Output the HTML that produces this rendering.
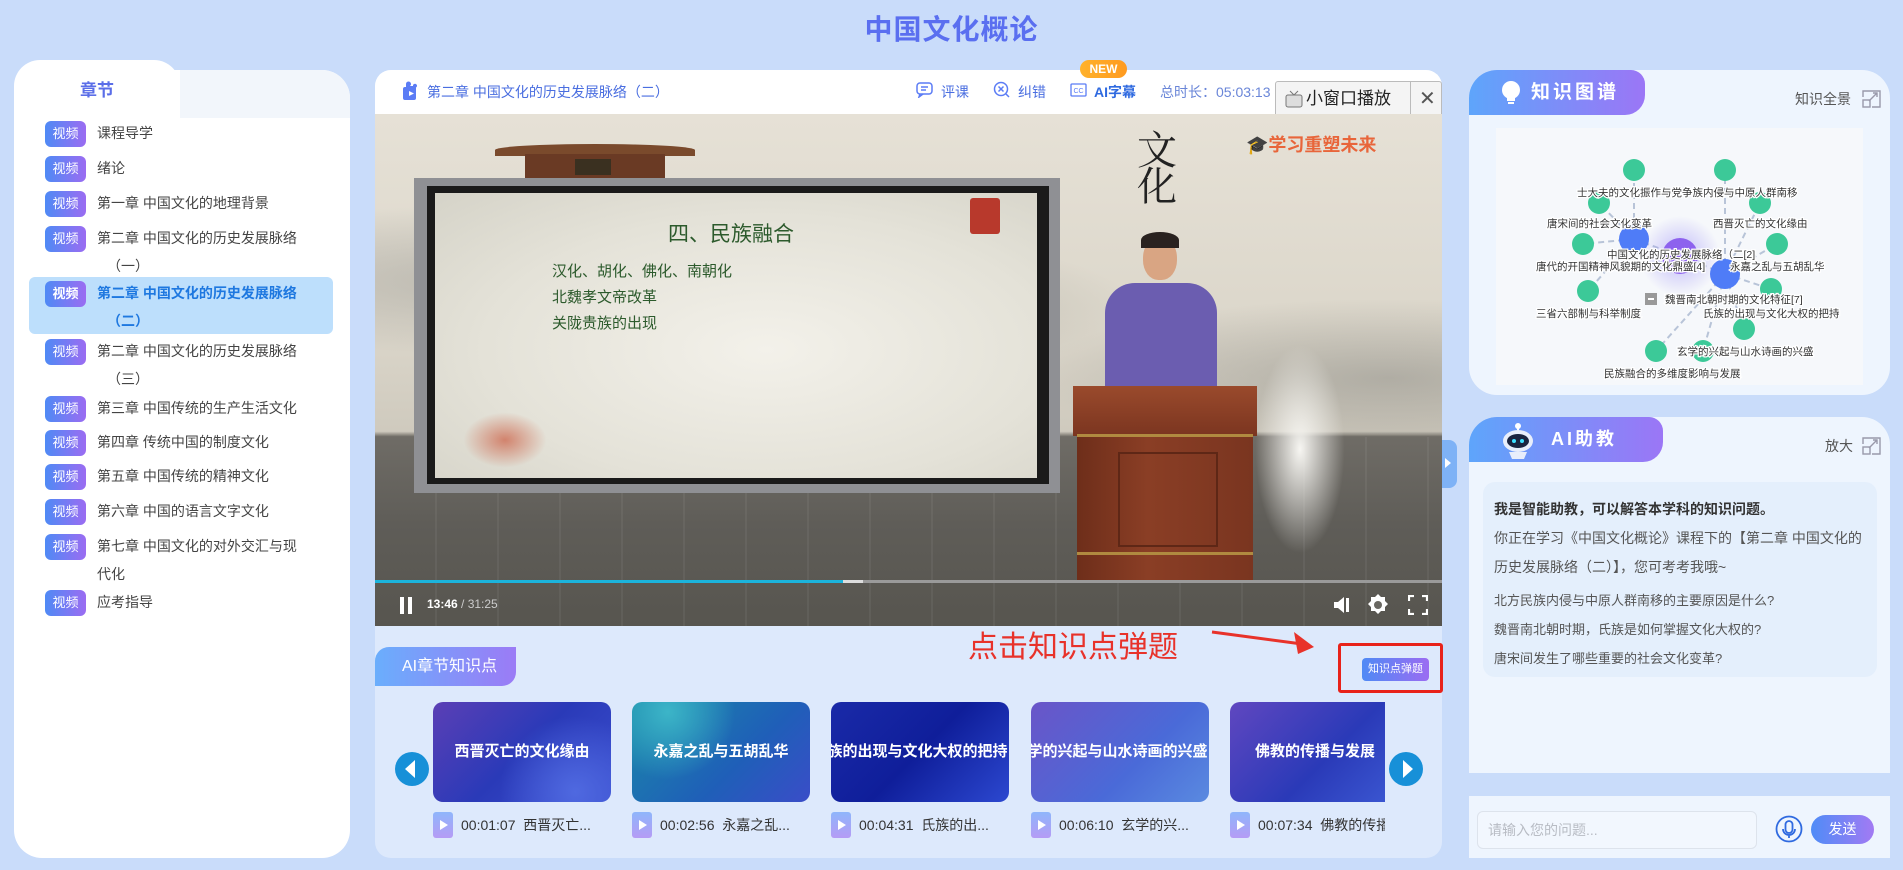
<!DOCTYPE html>
<html><head><meta charset="utf-8">
<style>
*{box-sizing:border-box;margin:0;padding:0}
body{width:1903px;height:870px;background:#c9dcfa;font-family:"Liberation Sans","Noto Sans CJK SC",sans-serif;position:relative;overflow:hidden;color:#333}
.abs{position:absolute}
.title{left:0;width:1903px;top:8px;text-align:center;font-size:28px;font-weight:bold;color:#5a6ff0;letter-spacing:1px}
.left{left:14px;top:70px;width:336px;height:788px;background:#fff;border-radius:28px}
.ltabbg{left:180px;top:70px;width:170px;height:48px;background:#f2f6fb;border-radius:0 28px 0 0}
.ltab{left:14px;top:60px;width:166px;height:60px;background:#fff;border-radius:26px 26px 0 0}
.ltab span{position:absolute;left:0;right:0;top:16px;text-align:center;font-size:17px;font-weight:bold;color:#5b6ee8}
.item{position:absolute;left:45px;font-size:14px;color:#444;line-height:28px}
.badge{position:absolute;left:0;top:2px;width:41px;height:26px;border-radius:6px;background:linear-gradient(90deg,#4f8af5,#9b6cf2);color:#fff;font-size:13px;text-align:center;line-height:26px}
.item .t{position:absolute;left:52px;top:0;white-space:nowrap}
.item .t2{position:absolute;left:62px;top:28px;white-space:nowrap}
.hl{left:29px;top:277px;width:304px;height:57px;background:#bddffc;border-radius:6px}
.center{left:375px;top:70px;width:1067px;height:788px;background:#dde9fc;border-radius:16px}
.chead{left:375px;top:70px;width:1067px;height:44px;background:#fff;border-radius:16px 16px 0 0}
.hd{font-size:14px;color:#4a6ee0;top:82px;white-space:nowrap}
.video{left:375px;top:114px;width:1067px;height:512px;overflow:hidden;background:linear-gradient(180deg,#e6e1d6 0%,#dcd7cb 40%,#cfcabe 62%,#6f6c66 63%,#5f5d58 80%,#57554f 100%)}
.right1{left:1469px;top:70px;width:421px;height:325px;background:#eef5fe;border-radius:28px}
.right2{left:1469px;top:417px;width:421px;height:356px;background:#eef5fe;border-radius:28px 28px 0 0}
.rtab{background:linear-gradient(90deg,#5ea5fb,#9b76f6);border-radius:0 0 20px 0;color:#fff;font-weight:bold;font-size:19px;letter-spacing:3px}
.card{position:absolute;top:702px;width:178px;height:100px;border-radius:10px;color:#fff;font-size:15px;font-weight:bold;text-align:center;line-height:100px;white-space:nowrap;overflow:hidden}
.ct{position:absolute;top:812px;font-size:14px;color:#333;white-space:nowrap;line-height:26px}
.ct i{display:inline-block;width:20px;height:26px;background:linear-gradient(180deg,#8fb6fb,#b59cf5);border-radius:3px;vertical-align:top;margin-right:8px;position:relative}
.ct i:after{content:"";position:absolute;left:7px;top:8px;border-left:8px solid #fff;border-top:5px solid transparent;border-bottom:5px solid transparent}
</style></head><body>
<div class="abs title">中国文化概论</div>

<div class="abs left"></div>
<div class="abs ltabbg"></div>
<div class="abs ltab"><span>章节</span></div>
<div class="abs hl"></div>
<div class="item" style="top:119px"><div class="badge">视频</div><div class="t">课程导学</div></div>
<div class="item" style="top:154px"><div class="badge">视频</div><div class="t">绪论</div></div>
<div class="item" style="top:189px"><div class="badge">视频</div><div class="t">第一章 中国文化的地理背景</div></div>
<div class="item" style="top:224px"><div class="badge">视频</div><div class="t">第二章 中国文化的历史发展脉络</div><div class="t2">（一）</div></div>
<div class="item" style="top:279px;color:#1e78e0;font-weight:bold"><div class="badge">视频</div><div class="t">第二章 中国文化的历史发展脉络</div><div class="t2">（二）</div></div>
<div class="item" style="top:337px"><div class="badge">视频</div><div class="t">第二章 中国文化的历史发展脉络</div><div class="t2">（三）</div></div>
<div class="item" style="top:394px"><div class="badge">视频</div><div class="t">第三章 中国传统的生产生活文化</div></div>
<div class="item" style="top:428px"><div class="badge">视频</div><div class="t">第四章 传统中国的制度文化</div></div>
<div class="item" style="top:462px"><div class="badge">视频</div><div class="t">第五章 中国传统的精神文化</div></div>
<div class="item" style="top:497px"><div class="badge">视频</div><div class="t">第六章 中国的语言文字文化</div></div>
<div class="item" style="top:532px"><div class="badge">视频</div><div class="t">第七章 中国文化的对外交汇与现</div><div class="t2" style="left:52px">代化</div></div>
<div class="item" style="top:588px"><div class="badge">视频</div><div class="t">应考指导</div></div>

<div class="abs center"></div>
<div class="abs chead"></div>
<svg class="abs" style="left:401px;top:81px" width="20" height="20" viewBox="0 0 20 20"><path d="M5 3a2.5 2.5 0 1 1 4 2h3a2 2 0 1 1 3 1.5V17a2 2 0 0 1-2 2H4a2 2 0 0 1-2-2V8a2 2 0 0 1 2-2h1z" fill="#5b7cf5"/><path d="M8 10l5 2.5-5 2.5z" fill="#fff"/></svg>
<div class="abs hd" style="left:427px;top:82px">第二章 中国文化的历史发展脉络（二）</div>
<svg class="abs" style="left:916px;top:82px" width="17" height="16"><rect x="1" y="1" width="15" height="11" rx="3" fill="none" stroke="#5b7cf5" stroke-width="1.5"/><path d="M4 12l-1 3 4-3M5 5h7M5 8h5" stroke="#5b7cf5" stroke-width="1.5" fill="none"/></svg>
<div class="abs hd" style="left:941px">评课</div>
<svg class="abs" style="left:993px;top:81px" width="17" height="17"><circle cx="8" cy="8" r="6.5" fill="none" stroke="#5b7cf5" stroke-width="1.5"/><path d="M5.5 5.5l5 5M10.5 5.5l-5 5M13 13l3 3" stroke="#5b7cf5" stroke-width="1.5"/></svg>
<div class="abs hd" style="left:1018px">纠错</div>
<svg class="abs" style="left:1070px;top:83px" width="17" height="14"><rect x="1" y="1" width="15" height="12" rx="1" fill="none" stroke="#5b7cf5" stroke-width="1.3"/><text x="3.5" y="10" font-size="7" fill="#5b7cf5" font-family="Liberation Sans">CC</text></svg>
<div class="abs hd" style="left:1094px;font-weight:bold;color:#2f6ae0">AI字幕</div>
<div class="abs" style="left:1080px;top:60px;width:47px;height:18px;border-radius:9px;background:linear-gradient(90deg,#ffb22c,#ff9a1f);color:#fff;font-size:12px;font-weight:bold;text-align:center;line-height:18px">NEW</div>
<div class="abs hd" style="left:1160px;color:#6a86d8">总时长：05:03:13</div>
<div class="abs" style="left:1275px;top:81px;width:167px;height:36px;background:#f4f4f4;border:1px solid #bbb;border-radius:3px;font-size:17px;color:#222;line-height:34px"><span style="position:absolute;left:30px">小窗口播放</span><span style="position:absolute;left:134px;top:0;width:1px;height:34px;background:#bbb"></span><span style="position:absolute;left:143px;font-size:20px;color:#555">✕</span>
<svg style="position:absolute;left:9px;top:8px" width="18" height="19"><path d="M5 1l4 4 4-4" stroke="#777" fill="none"/><rect x="1" y="5" width="16" height="12" rx="2" fill="#ddd" stroke="#777"/></svg></div>

<div class="abs video">
 <div class="abs" style="left:0;top:40px;width:1067px;height:280px;background:radial-gradient(ellipse at 15% 45%,rgba(140,140,135,.45),rgba(0,0,0,0) 35%),radial-gradient(ellipse at 50% 55%,rgba(150,150,140,.35),rgba(0,0,0,0) 30%),radial-gradient(ellipse at 95% 80%,rgba(120,120,115,.4),rgba(0,0,0,0) 25%)"></div>
 <div class="abs" style="left:120px;top:30px;width:200px;height:12px;background:#7a4a2c;border-radius:50% 50% 0 0"></div>
 <div class="abs" style="left:150px;top:40px;width:140px;height:28px;background:#6a3a24"></div>
 <div class="abs" style="left:200px;top:45px;width:36px;height:16px;background:#3a3020"></div>
 <div class="abs" style="left:135px;top:66px;width:170px;height:10px;background:#8a5a38;border-radius:50% 50% 0 0"></div>
 <div class="abs" style="left:0;top:323px;width:1067px;height:190px;background:repeating-linear-gradient(90deg,rgba(255,255,255,0) 0 60px,rgba(255,255,255,.05) 60px 62px)"></div>
 <div class="abs" style="left:39px;top:64px;width:646px;height:315px;background:#8f9094"></div>
 <div class="abs" style="left:52px;top:72px;width:622px;height:298px;background:#1a1a1a"></div>
 <div class="abs" style="left:60px;top:79px;width:602px;height:285px;background:radial-gradient(ellipse at 55% 55%,#f3f1ea 0%,#e4e2d8 60%,#d5d3c8 100%)"></div>
 <div class="abs" style="left:880px;top:230px;width:90px;height:210px;background:radial-gradient(ellipse,#f7f6f2 0%,rgba(245,243,238,0) 70%)"></div>
</div>
<div class="abs" style="left:668px;top:218px;font-size:21px;color:#2c5a2c">四、民族融合</div>
<div class="abs" style="left:552px;top:259px;font-size:15px;color:#2c5a2c;line-height:26px">汉化、胡化、佛化、南朝化<br>北魏孝文帝改革<br>关陇贵族的出现</div>
<div class="abs" style="left:970px;top:198px;width:30px;height:36px;background:#b8392c;border-radius:3px"></div>
<div class="abs" style="left:460px;top:410px;width:90px;height:60px;background:radial-gradient(ellipse,rgba(200,70,40,.6),rgba(0,0,0,0) 65%)"></div>
<div class="abs" style="left:1246px;top:131px;font-size:18px;font-weight:bold;color:#e8653a">🎓学习重塑未来</div>
<div class="abs" style="left:1137px;top:130px;font-size:40px;color:#222;font-family:'Noto Serif CJK SC',serif;line-height:36px;width:60px">文<br>化</div>
<div class="abs" style="left:1143px;top:236px;width:34px;height:44px;border-radius:50% 50% 45% 45%;background:#d9a583"></div>
<div class="abs" style="left:1141px;top:232px;width:38px;height:16px;border-radius:50% 50% 0 0;background:#2a2220"></div>
<div class="abs" style="left:1105px;top:283px;width:112px;height:110px;border-radius:30px 30px 0 0;background:#6b5db0"></div>
<div class="abs" style="left:1073px;top:386px;width:184px;height:50px;background:linear-gradient(180deg,#9a4a2c,#7b3520)"></div>
<div class="abs" style="left:1077px;top:434px;width:176px;height:146px;background:linear-gradient(90deg,#6e2e1a,#8a3e25 40%,#7a3520)"></div>
<div class="abs" style="left:1077px;top:434px;width:176px;height:3px;background:#b08a40"></div>
<div class="abs" style="left:1077px;top:552px;width:176px;height:3px;background:#b08a40"></div>
<div class="abs" style="left:1118px;top:452px;width:100px;height:95px;border:2px solid #5e2716"></div>
<div class="abs" style="left:375px;top:580px;width:1067px;height:3px;background:#9a9a9a"></div>
<div class="abs" style="left:375px;top:580px;width:468px;height:3px;background:#1bb4dc"></div>
<div class="abs" style="left:843px;top:580px;width:20px;height:3px;background:#ddd"></div>
<div class="abs" style="left:400px;top:597px;width:4px;height:17px;background:#fff"></div>
<div class="abs" style="left:408px;top:597px;width:4px;height:17px;background:#fff"></div>
<div class="abs" style="left:427px;top:597px;font-size:12px;color:#fff;font-weight:bold">13:46 <span style="color:#ccc;font-weight:normal">/ 31:25</span></div>
<svg class="abs" style="left:1332px;top:594px" width="22" height="22"><path d="M2 8h4l6-5v16l-6-5H2z" fill="#fff"/><rect x="14" y="4" width="3" height="14" fill="#fff"/></svg>
<svg class="abs" style="left:1366px;top:593px" width="24" height="24" viewBox="0 0 24 24"><path d="M12 1l3 3h4v4l3 3-3 3v4h-4l-3 3-3-3H5v-4l-3-3 3-3V4h4z" fill="#fff"/><circle cx="12" cy="12" r="4" fill="#6a6862"/></svg>
<svg class="abs" style="left:1408px;top:595px" width="20" height="20"><path d="M1 6V1h5M14 1h5v5M19 14v5h-5M6 19H1v-5" stroke="#fff" stroke-width="2.2" fill="none"/></svg>

<div class="abs" style="left:1442px;top:440px;width:15px;height:48px;background:#7eb2f6;border-radius:0 8px 8px 0"></div>
<div class="abs" style="left:1445px;top:458px;border-left:6px solid #fff;border-top:5px solid transparent;border-bottom:5px solid transparent"></div>

<div class="abs" style="left:375px;top:647px;width:141px;height:39px;background:linear-gradient(90deg,#6aaefc,#9b7bf6);border-radius:14px 0 14px 0;color:#fff;font-size:16px;line-height:39px;padding-left:27px">AI章节知识点</div>
<div class="abs" style="left:968px;top:622px;font-size:30px;color:#e8322a;white-space:nowrap">点击知识点弹题</div>
<svg class="abs" style="left:1210px;top:628px" width="105" height="26"><path d="M2 4L92 16" stroke="#e8322a" stroke-width="3"/><path d="M104 19L84 4 88 26z" fill="#e8322a"/></svg>
<div class="abs" style="left:1338px;top:643px;width:105px;height:50px;border:3px solid #e8221a;border-radius:3px"></div>
<div class="abs" style="left:1362px;top:658px;width:67px;height:23px;background:linear-gradient(90deg,#4f8af5,#9b6cf2);border-radius:4px;color:#fff;font-size:11px;text-align:center;line-height:23px">知识点弹题</div>

<div class="card" style="left:433px;background:radial-gradient(circle at 80% 90%,#4f69e0,transparent 45%),linear-gradient(135deg,#5b3fb5,#2a3ab8 50%,#3b4fd0)">西晋灭亡的文化缘由</div>
<div class="card" style="left:632px;background:radial-gradient(circle at 20% 10%,#3cb5c8,transparent 40%),linear-gradient(135deg,#1a8aa8,#1f5fb8 60%,#3a4dc8)">永嘉之乱与五胡乱华</div>
<div class="card" style="left:831px;background:linear-gradient(135deg,#1a2aa8,#0f1e9a 50%,#2c48d0);text-indent:-20px">氏族的出现与文化大权的把持</div>
<div class="card" style="left:1031px;background:linear-gradient(135deg,#6a55c8,#4a6ad8 60%,#5a8ae0);text-indent:-20px">玄学的兴起与山水诗画的兴盛</div>
<div class="card" style="left:1230px;width:155px;border-radius:10px 0 0 10px;background:linear-gradient(135deg,#6047c0,#2a3ab8 60%,#3a55d0);text-align:left;text-indent:25px">佛教的传播与发展</div>
<svg class="abs" style="left:394px;top:751px" width="36" height="36"><circle cx="18" cy="18" r="17" fill="#1790d8"/><path d="M21 9l-10 9 10 9z" fill="#fff"/></svg>
<svg class="abs" style="left:1388px;top:751px" width="36" height="36"><circle cx="18" cy="18" r="17" fill="#1790d8"/><path d="M15 9l10 9-10 9z" fill="#fff"/></svg>
<div class="ct" style="left:433px"><i></i>00:01:07&nbsp; 西晋灭亡...</div>
<div class="ct" style="left:632px"><i></i>00:02:56&nbsp; 永嘉之乱...</div>
<div class="ct" style="left:831px"><i></i>00:04:31&nbsp; 氏族的出...</div>
<div class="ct" style="left:1031px"><i></i>00:06:10&nbsp; 玄学的兴...</div>
<div class="ct" style="left:1230px;width:155px;overflow:hidden"><i></i>00:07:34&nbsp; 佛教的传播</div>

<div class="abs right1"></div>
<div class="abs rtab" style="left:1469px;top:70px;width:176px;height:45px;border-radius:28px 14px 20px 0;line-height:45px;padding-left:62px">知识图谱</div>
<svg class="abs" style="left:1500px;top:80px" width="22" height="26"><circle cx="11" cy="10" r="9" fill="#fff"/><rect x="7" y="18" width="8" height="3" fill="#fff"/><rect x="8" y="22" width="6" height="2" fill="#fff"/></svg>
<div class="abs" style="left:1795px;top:89px;font-size:14px;color:#555">知识全景</div>
<svg class="abs" style="left:1862px;top:90px" width="19" height="18"><path d="M1 7V1h17v16H10M7 11l8-8M11 3h4v4" stroke="#99a" fill="none" stroke-width="1.4"/><rect x="1" y="10" width="7" height="7" fill="none" stroke="#99a" stroke-width="1.4"/></svg>
<div class="abs" style="left:1496px;top:128px;width:367px;height:257px;background:#f6f8fb"></div>
<svg class="abs" style="left:1469px;top:70px" width="421" height="325" font-family="Liberation Sans,Noto Sans CJK SC,sans-serif">
<defs><radialGradient id="gl"><stop offset="0" stop-color="#8a7cf5" stop-opacity=".5"/><stop offset="1" stop-color="#8a7cf5" stop-opacity="0"/></radialGradient></defs>
<g transform="translate(-1469,-70)" stroke="#b8c4d8" stroke-width="2" stroke-dasharray="6 4">
<line x1="1634" y1="239" x2="1634" y2="170"/><line x1="1634" y1="239" x2="1599" y2="203"/><line x1="1634" y1="239" x2="1583" y2="244"/><line x1="1634" y1="239" x2="1588" y2="291"/><line x1="1634" y1="239" x2="1680" y2="256"/>
<line x1="1725" y1="274" x2="1725" y2="170"/><line x1="1725" y1="274" x2="1760" y2="203"/><line x1="1725" y1="274" x2="1777" y2="244"/><line x1="1725" y1="274" x2="1771" y2="289"/><line x1="1725" y1="274" x2="1744" y2="329"/><line x1="1725" y1="274" x2="1703" y2="351"/><line x1="1725" y1="274" x2="1656" y2="351"/><line x1="1725" y1="274" x2="1680" y2="256"/>
</g>
<g transform="translate(-1469,-70)">
<circle cx="1680" cy="256" r="40" fill="url(#gl)"/>
<g fill="#3cc998"><circle cx="1634" cy="170" r="11"/><circle cx="1725" cy="170" r="11"/><circle cx="1599" cy="203" r="11"/><circle cx="1760" cy="203" r="11"/><circle cx="1583" cy="244" r="11"/><circle cx="1777" cy="244" r="11"/><circle cx="1588" cy="291" r="11"/><circle cx="1771" cy="289" r="11"/><circle cx="1744" cy="329" r="11"/><circle cx="1656" cy="351" r="11"/><circle cx="1703" cy="351" r="11"/></g>
<circle cx="1680" cy="256" r="18" fill="#8d62ee"/>
<circle cx="1634" cy="239" r="15" fill="#4f7cf7"/><circle cx="1725" cy="274" r="15" fill="#4f7cf7"/>
<g font-size="10.5" fill="#333" stroke="#fff" stroke-width="2.5" paint-order="stroke">
<text x="1577" y="196">士大夫的文化振作与党争族内侵与中原人群南移</text>
<text x="1547" y="227">唐宋间的社会文化变革</text>
<text x="1713" y="227">西晋灭亡的文化缘由</text>
<text x="1607" y="258">中国文化的历史发展脉络（二[2]</text>
<text x="1536" y="270">唐代的开国精神风貌期的文化鼎盛[4]</text>
<text x="1730" y="270">永嘉之乱与五胡乱华</text>
<text x="1665" y="303">魏晋南北朝时期的文化特征[7]</text>
<text x="1536" y="317">三省六部制与科举制度</text>
<text x="1703" y="317">氏族的出现与文化大权的把持</text>
<text x="1677" y="355">玄学的兴起与山水诗画的兴盛</text>
<text x="1604" y="377">民族融合的多维度影响与发展</text>
</g>
<rect x="1645" y="293" width="12" height="12" fill="#999"/><rect x="1648" y="298" width="6" height="2" fill="#fff"/>
</g></svg>

<div class="abs right2"></div>
<div class="abs rtab" style="left:1469px;top:417px;width:194px;height:45px;border-radius:28px 14px 20px 0;line-height:45px;padding-left:82px;font-size:18px">AI助教</div>
<svg class="abs" style="left:1500px;top:422px" width="36" height="38"><circle cx="18" cy="4" r="3" fill="#fff"/><rect x="17" y="6" width="2" height="4" fill="#fff"/><ellipse cx="18" cy="19" rx="15" ry="11" fill="#e8eefb"/><ellipse cx="18" cy="19" rx="11" ry="7" fill="#1a2440"/><circle cx="14" cy="19" r="2" fill="#3ee0ff"/><circle cx="22" cy="19" r="2" fill="#3ee0ff"/><path d="M9 30h18l-3 7H12z" fill="#e8eefb"/></svg>
<div class="abs" style="left:1825px;top:436px;font-size:14px;color:#555">放大</div>
<svg class="abs" style="left:1862px;top:437px" width="19" height="18"><path d="M1 7V1h17v16H10M7 11l8-8M11 3h4v4" stroke="#99a" fill="none" stroke-width="1.4"/><rect x="1" y="10" width="7" height="7" fill="none" stroke="#99a" stroke-width="1.4"/></svg>
<div class="abs" style="left:1483px;top:482px;width:394px;height:195px;background:#e4effc;border-radius:12px"></div>
<div class="abs" style="left:1494px;top:495px;width:380px;font-size:14px;color:#555;line-height:29px">
<div style="font-weight:bold;color:#333">我是智能助教，可以解答本学科的知识问题。</div>
<div>你正在学习《中国文化概论》课程下的【第二章 中国文化的历史发展脉络（二）】，您可考考我哦~</div>
<div style="font-size:13px;line-height:29px;margin-top:4px">北方民族内侵与中原人群南移的主要原因是什么?<br>魏晋南北朝时期，氏族是如何掌握文化大权的?<br>唐宋间发生了哪些重要的社会文化变革?</div>
</div>
<div class="abs" style="left:1469px;top:796px;width:421px;height:62px;background:#eef5fe"></div>
<div class="abs" style="left:1477px;top:811px;width:280px;height:38px;border:1px solid #dde3ec;border-radius:6px;background:#f2f7fe;font-size:14px;color:#b8bcc4;line-height:36px;padding-left:10px">请输入您的问题...</div>
<svg class="abs" style="left:1775px;top:815px" width="28" height="28"><circle cx="14" cy="14" r="12.5" fill="none" stroke="#2f6ae0" stroke-width="1.8"/><rect x="10.5" y="6" width="7" height="12" rx="3.5" fill="none" stroke="#2f6ae0" stroke-width="1.8"/><path d="M8 14a6 6 0 0 0 12 0M14 20v3" stroke="#2f6ae0" stroke-width="1.8" fill="none"/></svg>
<div class="abs" style="left:1811px;top:815px;width:63px;height:29px;border-radius:15px;background:linear-gradient(90deg,#4f8cf7,#a27af3);color:#fff;font-size:14px;text-align:center;line-height:29px">发送</div>
</body></html>
